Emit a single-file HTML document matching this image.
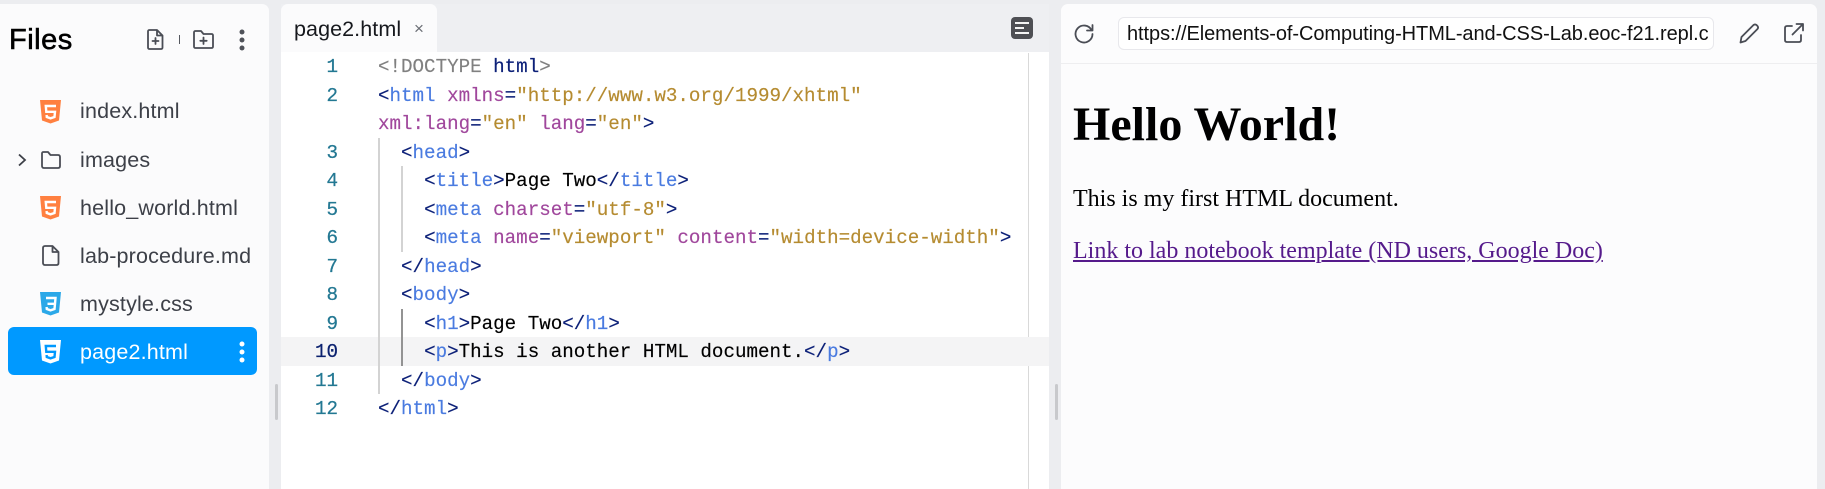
<!DOCTYPE html>
<html lang="en"><head><meta charset="utf-8"><title>Files</title>
<style>
html,body{margin:0;padding:0;width:1825px;height:489px;overflow:hidden;background:#ecedf0}
div,span,a{box-sizing:border-box}
.a{position:absolute}
svg{position:absolute;overflow:visible}
.ui{font-family:"Liberation Sans",sans-serif;white-space:nowrap}
.row{position:absolute;left:80px;font-size:21.5px;line-height:28px;color:#3d4048;letter-spacing:.17px}
.code{position:absolute;left:378px;top:53px;font:19.2px/28.5px "Liberation Mono",monospace;white-space:pre;color:#000;-webkit-text-stroke:.15px}
.ln{position:absolute;left:290px;width:48px;top:53px;text-align:right;font:19.2px/28.5px "Liberation Mono",monospace;color:#237893;-webkit-text-stroke:.25px}
.p{color:#0c2078}.t{color:#4a7be0}.at{color:#a0479c}.s{color:#b58b30}.g{color:#808080}
</style></head><body>
<div class="a" style="left:0;top:4px;width:269px;height:485px;background:#fbfbfc;border-radius:0 7px 0 0"></div>
<div class="a" style="left:275px;top:384px;width:3px;height:36px;background:#c8c9cc;border-radius:2px"></div>
<div class="a ui" style="left:9px;top:22px;font-size:29px;line-height:36px;color:#000;-webkit-text-stroke:.6px #000;letter-spacing:.5px">Files</div>

<svg style="left:146px;top:29px" width="20" height="22" viewBox="0 0 20 22" fill="none" stroke="#4a4d55" stroke-width="1.8" stroke-linejoin="round" stroke-linecap="round"><path d="M3.5 1H11L16.5 6.5V18.5Q16.500 20 15 20H3.500Q2 20 2 18.500V2.500Q2 1 3.500 1ZM11 1V6.500H16.500M9.500 9V15M6.500 12H12.500"/></svg>
<div class="a" style="left:179px;top:35px;width:1px;height:9px;background:#55585f"></div>
<svg style="left:193px;top:30px" width="22" height="20" viewBox="0 0 22 20" fill="none" stroke="#4a4d55" stroke-width="1.8" stroke-linejoin="round" stroke-linecap="round"><path d="M2.500 1H8L10.500 4H18.500Q20 4 20 5.500V16.500Q20 18 18.500 18H2.500Q1 18 1 16.500V2.500Q1 1 2.500 1ZM10.500 7.500V14M7.300 10.800H13.700"/></svg>
<svg style="left:236px;top:28px" width="12" height="24" fill="#4f5259"><circle cx="6" cy="4" r="2.500"/><circle cx="6" cy="12" r="2.500"/><circle cx="6" cy="20" r="2.500"/></svg>

<svg style="left:40px;top:100px" width="21" height="24" viewBox="0 0 21 24"><path fill="#ff8040" d="M0 0H21L19 20.500 10.500 23.500 2 20.500Z"/><path fill="none" stroke="#fff" stroke-width="2.400" d="M16 6H5.800L6.300 11.800H15L14.500 17 10.500 18.300 6.800 17 6.600 15"/></svg>
<div class="row ui" style="top:97px">index.html</div>

<svg style="left:17px;top:153px" width="10" height="14" fill="none" stroke="#3d4048" stroke-width="1.800"><path d="M2 1.500L8 7 2 12.500"/></svg>
<svg style="left:41px;top:151px" width="20" height="18" viewBox="0 0 20 18" fill="none" stroke="#4a4d55" stroke-width="1.800" stroke-linejoin="round"><path d="M2.500 1H7L9.500 4H17Q19 4 19 6V15Q19 17 17 17H3Q1 17 1 15V2.500Q1 1 2.500 1Z"/></svg>
<div class="row ui" style="top:146px">images</div>

<svg style="left:40px;top:196px" width="21" height="24" viewBox="0 0 21 24"><path fill="#ff8040" d="M0 0H21L19 20.500 10.500 23.500 2 20.500Z"/><path fill="none" stroke="#fff" stroke-width="2.400" d="M16 6H5.800L6.300 11.800H15L14.500 17 10.500 18.300 6.800 17 6.600 15"/></svg>
<div class="row ui" style="top:194px">hello_world.html</div>

<svg style="left:42px;top:245px" width="18" height="21" viewBox="0 0 18 21" fill="none" stroke="#4a4d55" stroke-width="1.800" stroke-linejoin="round"><path d="M3 1H10.500L16.500 7V18Q16.500 20 14.500 20H3Q1 20 1 18V3Q1 1 3 1ZM10.500 1V7H16.500"/></svg>
<div class="row ui" style="top:242px">lab-procedure.md</div>

<svg style="left:40px;top:292px" width="21" height="24" viewBox="0 0 21 24"><path fill="#2ba8e8" d="M0 0H21L19 20.500 10.500 23.500 2 20.500Z"/><path fill="none" stroke="#fff" stroke-width="2.400" d="M6 6H15.500L15 11.800H7.500M15 11.800L14.500 17 10.500 18.300 6.800 17 6.600 15"/></svg>
<div class="row ui" style="top:290px">mystyle.css</div>

<div class="a" style="left:8px;top:327px;width:249px;height:48px;background:#0099ff;border-radius:6px"></div>
<svg style="left:40px;top:340px" width="21" height="24" viewBox="0 0 21 24"><path fill="#fff" d="M0 0H21L19 20.500 10.500 23.500 2 20.500Z"/><path fill="none" stroke="#0099ff" stroke-width="2.400" d="M16 6H5.800L6.300 11.800H15L14.500 17 10.500 18.300 6.800 17 6.600 15"/></svg>
<div class="row ui" style="top:338px;color:#fff">page2.html</div>
<svg style="left:236px;top:340px" width="12" height="24" fill="#fff"><circle cx="6" cy="4" r="2.500"/><circle cx="6" cy="12" r="2.500"/><circle cx="6" cy="20" r="2.500"/></svg>

<!-- editor -->
<div class="a" style="left:281px;top:4px;width:768px;height:48px;background:#eeeff2"></div>
<div class="a" style="left:281px;top:52px;width:768px;height:437px;background:#fff"></div>
<div class="a" style="left:281px;top:4px;width:156px;height:48px;background:#fbfbfc;border-radius:7px 7px 0 0"></div>
<div class="a ui" style="left:294px;top:15px;font-size:21.5px;line-height:28px;color:#16181d;letter-spacing:.08px">page2.html</div>
<div class="a ui" style="left:414px;top:15px;font-size:17px;line-height:28px;color:#6a6d74">×</div>
<div class="a" style="left:1011px;top:17px;width:22px;height:22px;background:#4e4f54;border-radius:4px"></div>
<div class="a" style="left:1015px;top:22px;width:14px;height:2px;background:#f4f4f4"></div>
<div class="a" style="left:1015px;top:27px;width:9px;height:2px;background:#f4f4f4"></div>
<div class="a" style="left:1015px;top:32px;width:14px;height:2px;background:#f4f4f4"></div>
<div class="a" style="left:1028px;top:53px;width:1px;height:436px;background:#d9d9d9"></div>
<div class="a" style="left:281px;top:337px;width:768px;height:29px;background:#f4f4f5"></div>
<div class="a" style="left:378px;top:138px;width:1.500px;height:256px;background:#d3d3d3"></div>
<div class="a" style="left:401px;top:166px;width:1.500px;height:86px;background:#d3d3d3"></div>
<div class="a" style="left:401px;top:309px;width:1.500px;height:57px;background:#939393"></div>

<div class="ln">1
<br>2<br>&nbsp;<br>3<br>4<br>5<br>6<br>7<br>8<br>9<br><span style="color:#0b216f">10</span><br>11<br>12</div>
<div class="code"><span class="g">&lt;!DOCTYPE </span><span class="p">html</span><span class="g">&gt;</span>
<span class="p">&lt;</span><span class="t">html</span> <span class="at">xmlns</span><span class="p">=</span><span class="s">"http://www.w3.org/1999/xhtml"</span>
<span class="at">xml:lang</span><span class="p">=</span><span class="s">"en"</span> <span class="at">lang</span><span class="p">=</span><span class="s">"en"</span><span class="p">&gt;</span>
  <span class="p">&lt;</span><span class="t">head</span><span class="p">&gt;</span>
    <span class="p">&lt;</span><span class="t">title</span><span class="p">&gt;</span>Page Two<span class="p">&lt;/</span><span class="t">title</span><span class="p">&gt;</span>
    <span class="p">&lt;</span><span class="t">meta</span> <span class="at">charset</span><span class="p">=</span><span class="s">"utf-8"</span><span class="p">&gt;</span>
    <span class="p">&lt;</span><span class="t">meta</span> <span class="at">name</span><span class="p">=</span><span class="s">"viewport"</span> <span class="at">content</span><span class="p">=</span><span class="s">"width=device-width"</span><span class="p">&gt;</span>
  <span class="p">&lt;/</span><span class="t">head</span><span class="p">&gt;</span>
  <span class="p">&lt;</span><span class="t">body</span><span class="p">&gt;</span>
    <span class="p">&lt;</span><span class="t">h1</span><span class="p">&gt;</span>Page Two<span class="p">&lt;/</span><span class="t">h1</span><span class="p">&gt;</span>
    <span class="p">&lt;</span><span class="t">p</span><span class="p">&gt;</span>This is another HTML document.<span class="p">&lt;/</span><span class="t">p</span><span class="p">&gt;</span>
  <span class="p">&lt;/</span><span class="t">body</span><span class="p">&gt;</span>
<span class="p">&lt;/</span><span class="t">html</span><span class="p">&gt;</span></div>

<!-- preview -->
<div class="a" style="left:1055px;top:384px;width:3px;height:36px;background:#c8c9cc;border-radius:2px"></div>
<div class="a" style="left:1061px;top:4px;width:756px;height:485px;background:#fcfcfd;border-radius:7px 7px 0 0"></div>
<div class="a" style="left:1061px;top:63px;width:756px;height:1px;background:#eeeef0"></div>
<svg style="left:1073px;top:22px" width="22" height="22" viewBox="0 0 22 22" fill="none" stroke="#4a4d55" stroke-width="1.800" stroke-linecap="round" stroke-linejoin="round"><path d="M18.500 8A8.500 8.500 0 1 0 19.500 12M19.500 3V8.500H14"/></svg>
<div class="a" style="left:1118px;top:17px;width:596px;height:33px;border:1.500px solid #e8e8ec;border-radius:6px;background:#fff"></div>
<div class="a ui" style="left:1127px;top:20px;width:583px;height:28px;overflow:hidden;font-size:20px;line-height:28px;color:#111;letter-spacing:-.07px">https://Elements-of-Computing-HTML-and-CSS-Lab.eoc-f21.repl.c</div>
<svg style="left:1738px;top:22px" width="22" height="22" viewBox="0 0 22 22" fill="none" stroke="#4a4d55" stroke-width="1.800" stroke-linejoin="round"><path d="M2.500 20.500L3.500 15 15.500 3Q17 1.800 18.500 3L19.500 4Q20.700 5.500 19.500 7L7.500 19Z"/></svg>
<svg style="left:1783px;top:22px" width="22" height="22" viewBox="0 0 22 22" fill="none" stroke="#4a4d55" stroke-width="1.800" stroke-linecap="round" stroke-linejoin="round"><path d="M9 4H4Q2 4 2 6V18Q2 20 4 20H16Q18 20 18 18V13M9.500 12.500L20 2M13.500 2H20V8.500"/></svg>

<div class="a" style="left:1073px;top:98px;font:700 48px/54px 'Liberation Serif',serif;color:#000;white-space:nowrap">Hello World!</div>
<div class="a" style="left:1073px;top:185px;font:24px/28px 'Liberation Serif',serif;color:#000;white-space:nowrap">This is my first HTML document.</div>
<div class="a" style="left:1073px;top:237px;font:24px/28px 'Liberation Serif',serif;color:#551a8b;white-space:nowrap;text-decoration:underline">Link to lab notebook template (ND users, Google Doc)</div>
</body></html>
